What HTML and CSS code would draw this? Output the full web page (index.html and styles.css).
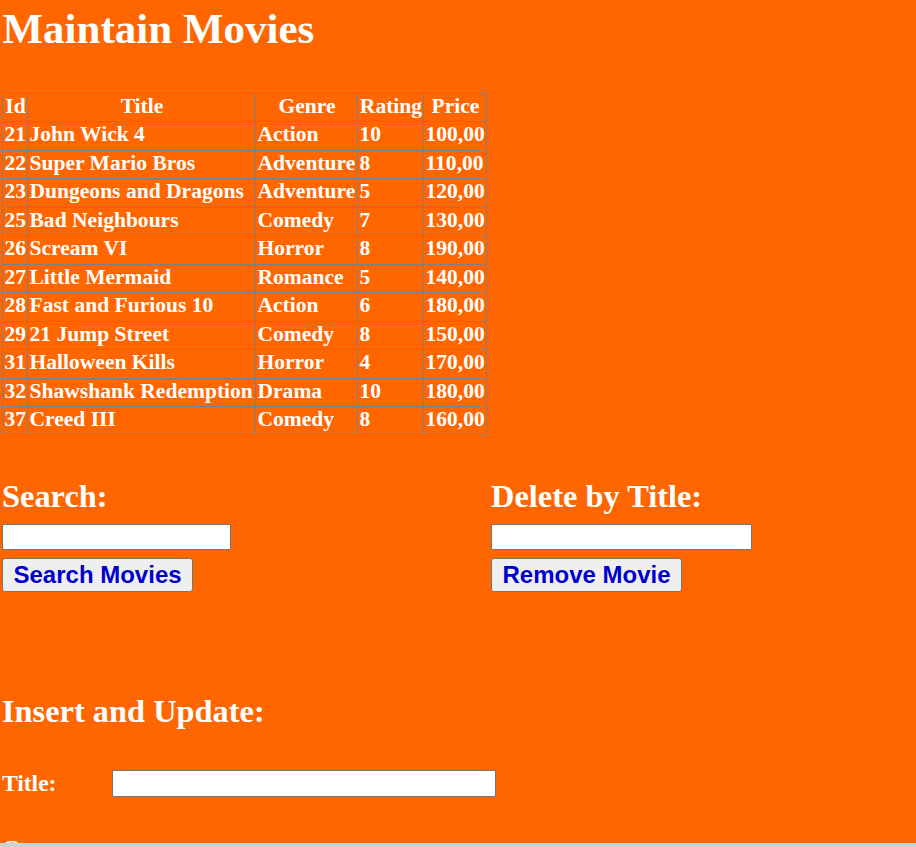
FILE: index.html
```html
<!DOCTYPE html>
<html lang="en">
<head>
<meta charset="utf-8">
<title>Maintain Movies</title>
<link rel="stylesheet" href="styles.css">
</head>
<body>
<h1 class="page-title">Maintain Movies</h1>

<table class="movies">
  <thead>
    <tr><th class="col-id">Id</th><th class="col-title">Title</th><th class="col-genre">Genre</th><th class="col-rating">Rating</th><th class="col-price">Price</th></tr>
  </thead>
  <tbody>
    <tr><td>21</td><td>John Wick 4</td><td>Action</td><td>10</td><td>100,00</td></tr>
    <tr><td>22</td><td>Super Mario Bros</td><td>Adventure</td><td>8</td><td>110,00</td></tr>
    <tr><td>23</td><td>Dungeons and Dragons</td><td>Adventure</td><td>5</td><td>120,00</td></tr>
    <tr><td>25</td><td>Bad Neighbours</td><td>Comedy</td><td>7</td><td>130,00</td></tr>
    <tr><td>26</td><td>Scream VI</td><td>Horror</td><td>8</td><td>190,00</td></tr>
    <tr><td>27</td><td>Little Mermaid</td><td>Romance</td><td>5</td><td>140,00</td></tr>
    <tr><td>28</td><td>Fast and Furious 10</td><td>Action</td><td>6</td><td>180,00</td></tr>
    <tr><td>29</td><td>21 Jump Street</td><td>Comedy</td><td>8</td><td>150,00</td></tr>
    <tr><td>31</td><td>Halloween Kills</td><td>Horror</td><td>4</td><td>170,00</td></tr>
    <tr><td>32</td><td>Shawshank Redemption</td><td>Drama</td><td>10</td><td>180,00</td></tr>
    <tr><td>37</td><td>Creed III</td><td>Comedy</td><td>8</td><td>160,00</td></tr>
  </tbody>
</table>

<div class="tools">
  <section class="tool">
    <h2 class="section-title">Search:</h2>
    <input class="field field-search" type="text">
    <button class="btn" type="button">Search Movies</button>
  </section>
  <section class="tool">
    <h2 class="section-title">Delete by Title:</h2>
    <input class="field field-delete" type="text">
    <button class="btn" type="button">Remove Movie</button>
  </section>
</div>

<section class="editor">
  <h2 class="section-title">Insert and Update:</h2>
  <div class="form-grid">
    <label class="form-label">Title:</label>
    <input class="field field-wide" type="text">
    <label class="form-label">Genre:</label>
    <span class="form-spacer"></span>
  </div>
</section>

<div class="window-edge"></div>
</body>
</html>
```

FILE: styles.css
```css
html {
  background: #ff6600;
}

body {
  margin: 0;
  padding: 0 2px 0 2px;
  background: #ff6600;
  color: #ffffff;
  font-family: "Liberation Serif", "Times New Roman", serif;
  font-weight: bold;
  overflow: hidden;
}

.page-title {
  margin: 0;
  padding: 4px 0 0 0.5px;
  font-size: 43px;
  line-height: 49px;
  font-weight: bold;
}

.movies {
  margin-top: 40px;
  table-layout: fixed;
  width: 485px;
  border-collapse: separate;
  border-spacing: 0;
  border-top: 1px solid #808080;
  border-left: 1px solid #808080;
  font-size: 21.55px;
  line-height: 24px;
}

.movies th,
.movies td {
  box-sizing: border-box;
  height: 28px;
  vertical-align: top;
  border-right: 1px solid #808080;
  border-bottom: 1px solid #808080;
  padding: 0 0 0 1.5px;
  white-space: nowrap;
  overflow: hidden;
}

.movies tbody tr:nth-child(odd) td {
  height: 29px;
}

.col-id { width: 25px; }
.col-title { width: 228px; }
.col-genre { width: 102px; }
.col-rating { width: 66px; }
.col-price { width: 63px; }

.movies th {
  text-align: center;
  padding-left: 1px;
}

.movies td {
  text-align: left;
}

.tools {
  display: grid;
  grid-template-columns: 489px 1fr;
  margin-top: 42px;
}

.tool {
  display: flex;
  flex-direction: column;
  align-items: flex-start;
}

.section-title {
  margin: 0 0 9px;
  font-size: 32.4px;
  line-height: 37px;
  font-weight: bold;
}

.field {
  box-sizing: border-box;
  height: 26px;
  margin: 0;
  padding: 0 2px;
  background: #ffffff;
  border: 1px solid #767676;
  border-radius: 2px;
}

.field-search {
  width: 229px;
}

.field-delete {
  width: 261px;
}

.field-wide {
  width: 384px;
  height: 27px;
}

.btn {
  margin-top: 8px;
  padding: 2px 10.5px;
  background: #efefef;
  color: #0000cd;
  border: 1px solid #767676;
  border-radius: 3px;
  font-family: "Liberation Sans", Arial, sans-serif;
  font-weight: bold;
  font-size: 24px;
  line-height: 28px;
}

.editor {
  margin-top: 101px;
}

.editor .section-title {
  margin-bottom: 40px;
}

.form-grid {
  display: grid;
  grid-template-columns: 110px 384px;
  row-gap: 38px;
  align-items: center;
}

.form-label {
  font-size: 23.5px;
  line-height: 27px;
}

.window-edge {
  position: fixed;
  left: 0;
  right: 0;
  bottom: 0;
  height: 4px;
  background: #cbd2d1;
}
```
